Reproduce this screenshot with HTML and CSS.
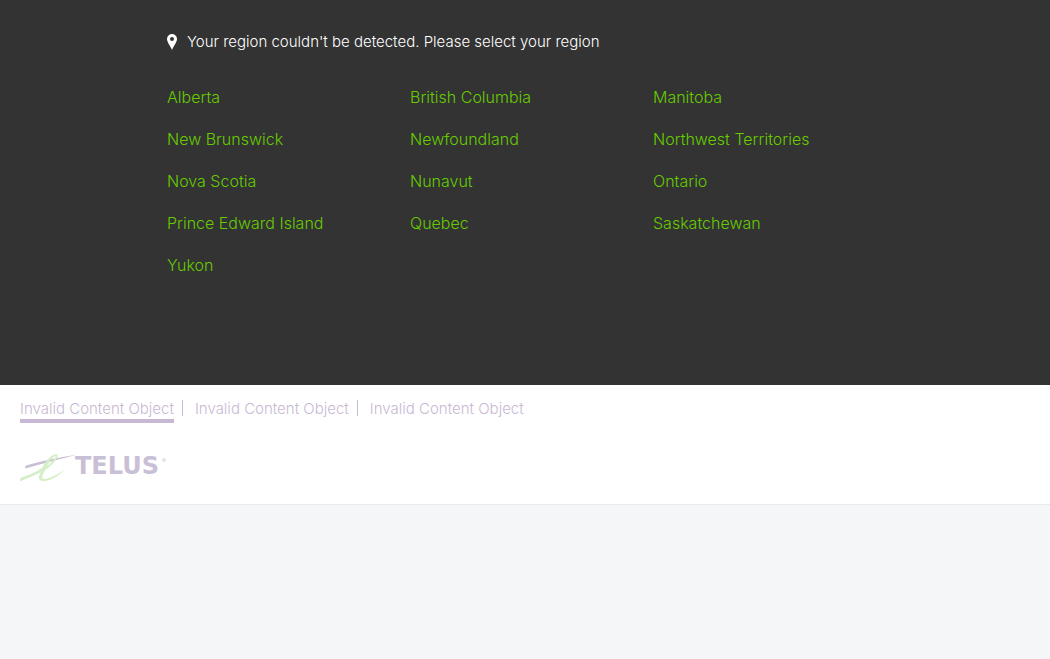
FILE: index.html
```html
<!DOCTYPE html>
<html lang="en">
<head>
<meta charset="utf-8">
<meta name="viewport" content="width=device-width, initial-scale=1">
<title>TELUS</title>
<link rel="stylesheet" href="styles.css">
</head>
<body>
<section class="region-picker">
  <div class="region-inner">
    <p class="region-message">
      <svg class="pin" viewBox="0 0 10 16" aria-hidden="true"><path fill="#fff" fill-rule="evenodd" d="M5 0a5 5 0 0 0-5 5c0 3 3 6.500 5 11 2-4.500 5-8 5-11a5 5 0 0 0-5-5zm0 2.900a2 2 0 1 1 0 4 2 2 0 0 1 0-4z"/></svg>
      <span>Your region couldn't be detected. Please select your region</span>
    </p>
    <ul class="regions">
      <li><a href="#">Alberta</a></li>
      <li><a href="#">British Columbia</a></li>
      <li><a href="#">Manitoba</a></li>
      <li><a href="#">New Brunswick</a></li>
      <li><a href="#">Newfoundland</a></li>
      <li><a href="#">Northwest Territories</a></li>
      <li><a href="#">Nova Scotia</a></li>
      <li><a href="#">Nunavut</a></li>
      <li><a href="#">Ontario</a></li>
      <li><a href="#">Prince Edward Island</a></li>
      <li><a href="#">Quebec</a></li>
      <li><a href="#">Saskatchewan</a></li>
      <li><a href="#">Yukon</a></li>
    </ul>
  </div>
</section>
<header class="site-header">
  <nav class="tabs">
    <a class="tab tab-active" href="#">Invalid Content Object</a>
    <a class="tab" href="#">Invalid Content Object</a>
    <a class="tab" href="#">Invalid Content Object</a>
  </nav>
  <a class="logo" href="#" aria-label="TELUS home">
    <svg class="logo-art" viewBox="0 0 148 30">
      <path fill="#c9bfd6" d="M6 12.500C20 8.500 38 4.500 57.500 1.500 43 5.500 22 10.500 5.500 15.500c-.6-.8-.1-2.500.5-3z"/>
      <path fill="#d4efc8" fill-rule="evenodd" d="M.8 24.800C10 22 17 18.500 22.500 14.500 26 7.500 32 .8 36 1.200c5 .8-1.500 9-10.500 15.500-3.500 5.500-4.500 9.300-1.500 9.300 5.500 0 13-4.200 20.500-9.500-5 6.200-14 11.800-21.500 11.500-5-.3-5-4.500-2-8.800C14 22.500 7 25.500.3 28.200c-.5-.9-.2-2.800.5-3.400zM27 13.200C32 9.200 36.500 4.200 35.500 3.200c-1.500-.5-5.500 4.500-8.500 10z"/>
      <text class="wordmark" x="55" y="21">TELUS</text>
      <text class="registered" x="142" y="10">®</text>
    </svg>
  </a>
</header>
</body>
</html>
```
FILE: styles.css
```css
* {
  box-sizing: border-box;
}

body {
  margin: 0;
  background: #f4f6f8;
  font-family: Inter, "Liberation Sans", sans-serif;
  font-size: 15px;
  font-weight: 300;
  line-height: 20px;
}

a {
  text-decoration: none;
}

.region-picker {
  padding: 32px 24px 99px;
  background: #333;
}

.region-inner {
  max-width: 716px;
  margin: 0 auto;
}

.region-message {
  display: flex;
  align-items: center;
  gap: 10px;
  margin: 0 0 24px;
  color: #fff;
}

.pin {
  flex: none;
  width: 10px;
  height: 16px;
}

.regions {
  display: grid;
  grid-template-columns: repeat(3, 1fr);
  column-gap: 13px;
  margin: 0;
  padding: 0;
  list-style: none;
  font-size: 16px;
  line-height: 42px;
}

.regions a {
  color: #66cc00;
}

.site-header {
  padding: 15px 20px 21px;
  border-bottom: 1px solid #e8eaed;
  background: #fff;
}

.tabs {
  display: flex;
  align-items: flex-start;
  margin-bottom: 30px;
}

.tab {
  height: 23px;
  line-height: 18px;
  color: #c9b8d4;
}

.tab + .tab {
  height: 16px;
  margin-left: 8px;
  padding-left: 12px;
  border-left: 1px solid #c9b8d4;
}

.tab-active {
  border-bottom: 4px solid #c9b8d4;
}

.logo {
  display: block;
  width: 148px;
}

.logo-art {
  display: block;
  width: 148px;
  height: 30px;
}

.wordmark {
  fill: #c9bfd6;
  font-family: "DejaVu Sans", sans-serif;
  font-size: 24px;
  font-weight: 700;
}

.registered {
  fill: #c9bfd6;
  font-size: 6px;
}
```
